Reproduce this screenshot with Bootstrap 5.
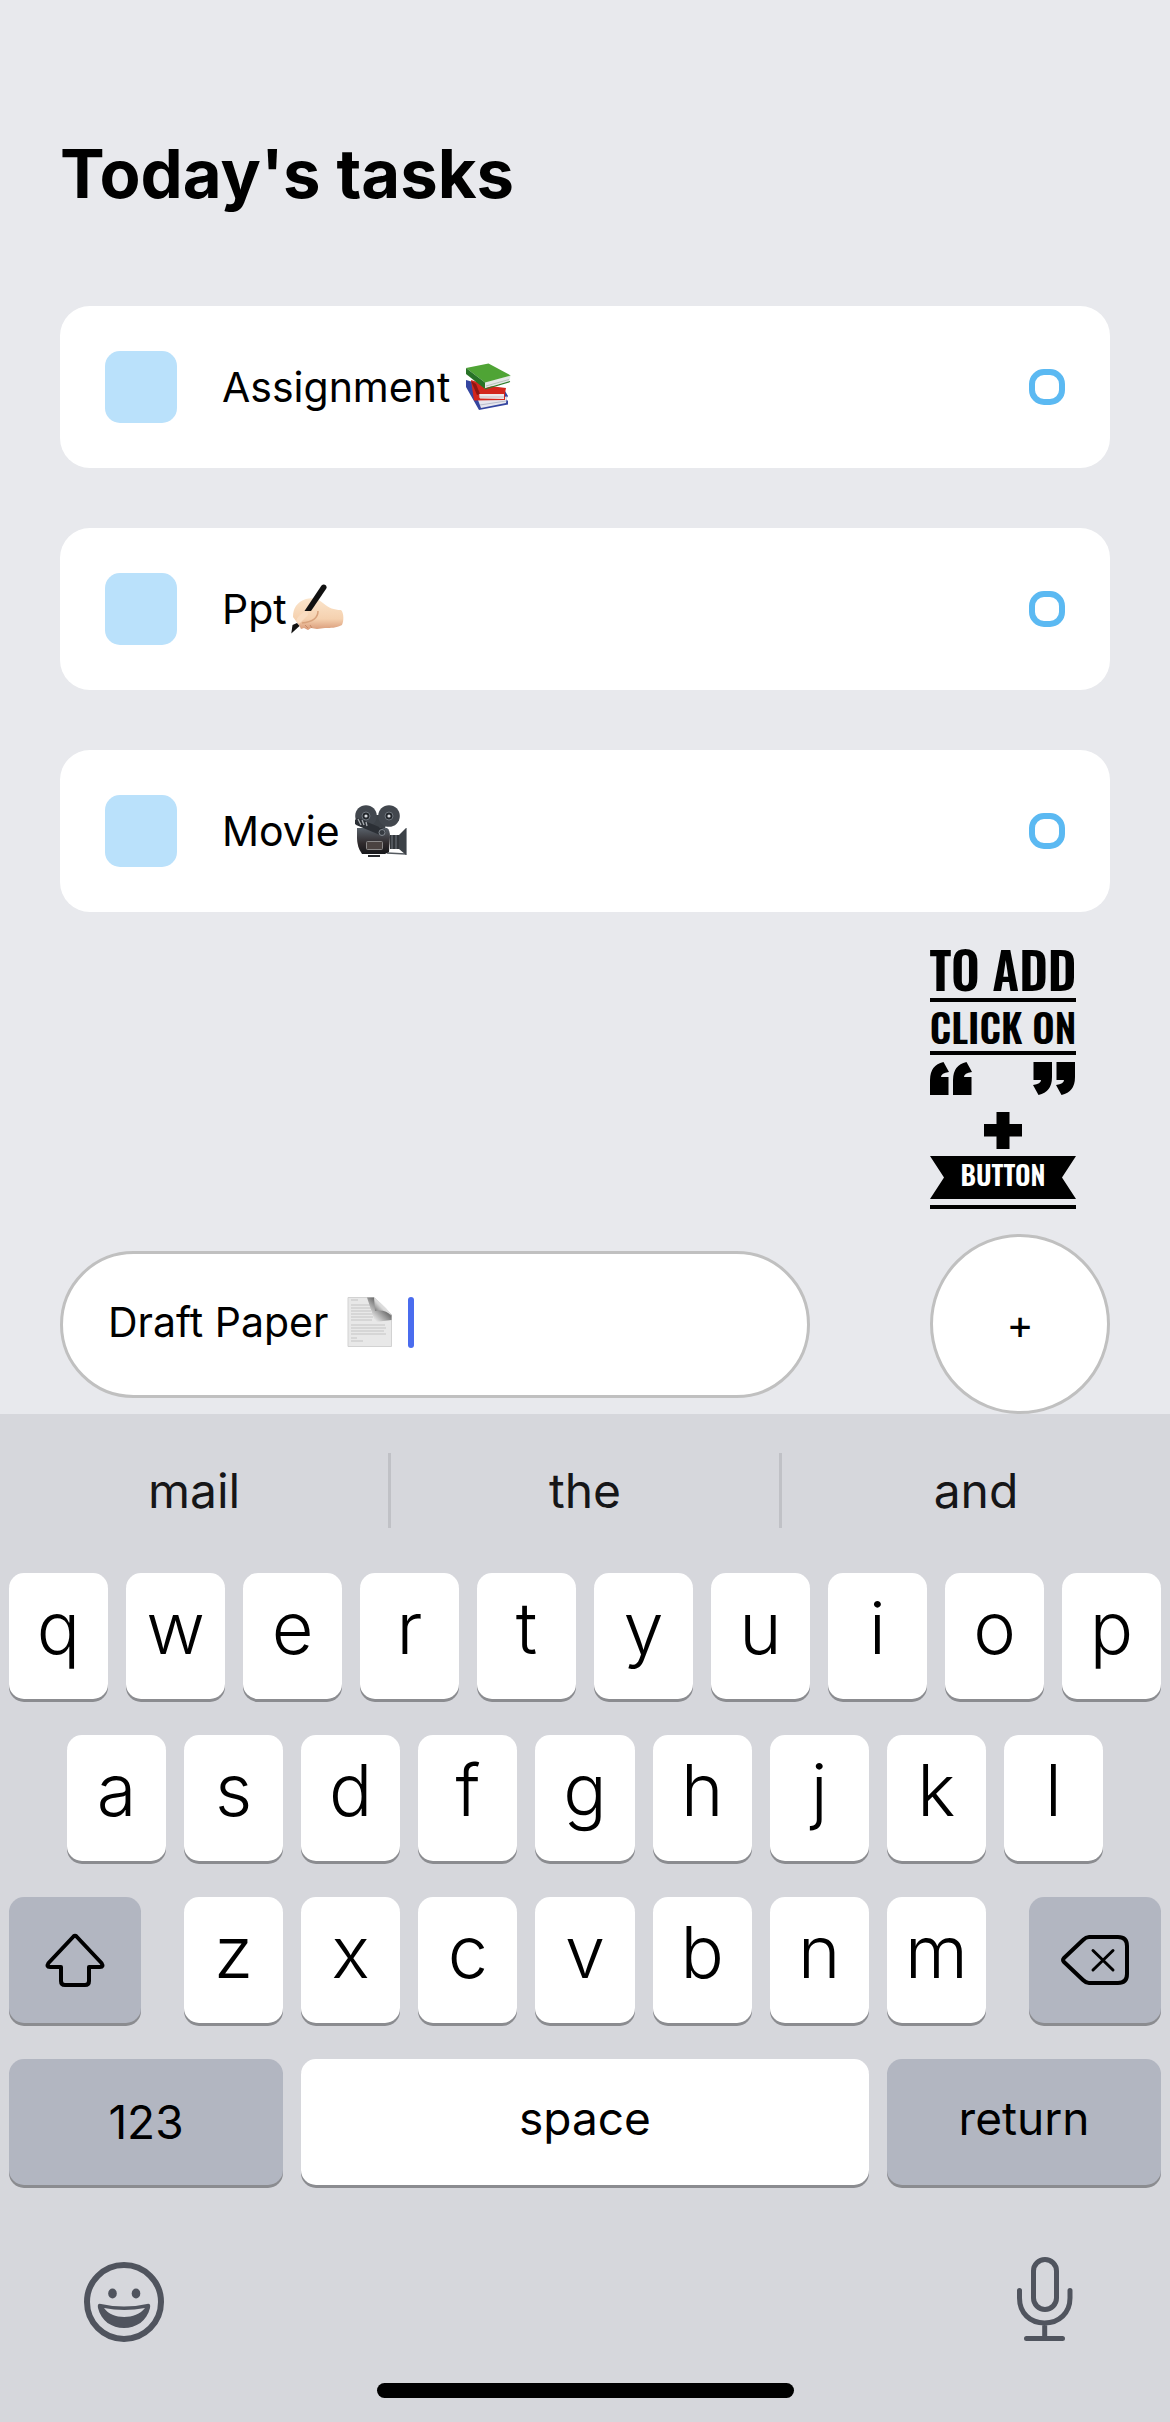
<!DOCTYPE html>
<html lang="en">
<head>
<meta charset="utf-8">
<meta name="viewport" content="width=device-width, initial-scale=1">
<title>Today's tasks</title>
<link rel="stylesheet" href="https://cdn.jsdelivr.net/npm/bootstrap@5.3.0/dist/css/bootstrap.min.css">
<style>
  body { background: #e8e9ed; color: #000; font-family: Inter, Roboto, "Liberation Sans", sans-serif; font-size: 41px; line-height: 60px; }
  .tasks-page { padding: 132px 60px 0; }
  .tasks-title { font-size: 67px; line-height: 84px; margin-bottom: 90px; }
  .task-list { gap: 60px; }
  .task-item { background: #fff; border-radius: 30px; padding: 45px; gap: 45px; }
  .task-square { width: 72px; height: 72px; border-radius: 15px; background: #bae1fb; }
  .task-check { appearance: none; width: 36px; height: 36px; margin: 0; border: 6px solid #5bb9f2; border-radius: 15px; background: #fff; }
  .emoji { display: inline-block; flex: none; }
  .emoji-spaced { margin-left: 15px; }
  .emoji-tight { margin-left: 4px; }
  .add-hint { margin: 34px 34px 24px 0; overflow: visible; }
  .hint-word { font-family: Oswald, "Liberation Sans Narrow", "Roboto Condensed", "DejaVu Sans Condensed", sans-serif; font-weight: 600; text-anchor: middle; }
  .entry-pill { flex: 0 1 750px; height: 147px; border: 3px solid #c0c0c0; border-radius: 74px; padding: 0 45px 4px; background: #fff; }
  .entry-input { width: 239px; border: 0; padding: 0; background: none; color: #000; outline: 0; caret-color: transparent; }
  .entry-caret { width: 6px; height: 51px; border-radius: 3px; background: #4a6cee; margin-left: 15px; }
  .add-btn { width: 180px; height: 180px; border: 3px solid #c0c0c0; background: #fff; padding: 0; color: #000; }
  .keyboard { background: #d6d7dc; padding-bottom: 24px; }
  .hints { padding: 39px 0 45px; }
  .hint-btn { border: 0; background: none; color: #161618; font-size: 48px; line-height: 75px; padding: 0; flex: 1 1 0; }
  .hint-btn + .hint-btn { border-left: 3px solid #c0c1c6; }
  .key-rows { gap: 36px; padding: 0 9px; }
  .key-row { gap: 18px; }
  .key-row-inset { padding: 0 58px; }
  .key-group { gap: 18px; flex: 1 1 0; margin: 0 25px; }
  .key { flex: 1 1 0; min-width: 0; height: 126px; border: 0; border-radius: 15px; background: #fff; color: #000; box-shadow: 0 3px 0 #8b8c90; padding: 0 0 16px; font-size: 72px; font-weight: 350; line-height: 90px; }
  .key-gray { background: #b2b6c1; }
  .key-icon { flex: 0 0 132px; padding: 0; }
  .key-word { font-size: 46px; font-weight: 400; line-height: 60px; padding: 0 0 8px; }
  .key-num { padding: 0; }
  .key-side { flex: 274 1 0; }
  .key-space { flex: 568 1 0; }
  .tool-row { padding: 69px 80px 39px 80px; }
  .tool-btn { border: 0; background: none; padding: 0; }
  .home-bar { width: 417px; height: 15px; border-radius: 8px; background: #000; }
</style>
<script src="https://cdn.jsdelivr.net/npm/bootstrap@5.3.0/dist/js/bootstrap.bundle.min.js"></script>
</head>
<body>
<main class="tasks-page">
  <h1 class="tasks-title fw-bold">Today's tasks</h1>
  <ul class="task-list list-unstyled d-flex flex-column mb-0">
    <li class="task-item d-flex align-items-center">
      <span class="task-square"></span>
      <label class="flex-grow-1 d-flex align-items-center" for="t1">Assignment
        <svg class="emoji emoji-spaced" width="46" height="48" viewBox="0 0 46 48" role="img" aria-label="books">
          <path d="M1 17L1 24 14 47 43 41.500 43 38 41 36 43 33 40 28z" fill="#3546a0"/>
          <path d="M13 37L42 33.500 41 40 16 45z" fill="#e6e6ee"/><path d="M15 42L41 38" stroke="#b9bccb"/>
          <path d="M6 17L25 23 41 25 40 30 40 37 9 37.500z" fill="#d3261c"/>
          <path d="M14 31L39 31 39 36 15 35.500z" fill="#eee9ea"/><path d="M14 34L39 34" stroke="#c9bfc4"/>
          <path d="M6 18L12 32 15 31 11 21z" fill="#8d1512"/>
          <path d="M19 25.500L20 19 45.500 12.500 44.500 18z" fill="#e4e8e6"/><path d="M21 23L44 16.500" stroke="#b8c4bb"/>
          <path d="M1 5L23.500.5 45.700 12.500 20 19.500z" fill="#4fa435"/>
          <path d="M1 5L20 19.500 20 26 1 11z" fill="#277226"/><path d="M20 26L45 18.500" stroke="#2f7c2a" stroke-width="1.300"/>
        </svg>
      </label>
      <input class="task-check" type="checkbox" id="t1">
    </li>
    <li class="task-item d-flex align-items-center">
      <span class="task-square"></span>
      <label class="flex-grow-1 d-flex align-items-center" for="t2">Ppt
        <svg class="emoji emoji-tight" width="53" height="50" viewBox="0 0 53 50" role="img" aria-label="writing hand">
          <defs><linearGradient id="skin" x2="0" y2="1"><stop stop-color="#fbe5cc"/><stop offset=".65" stop-color="#f5d1af"/><stop offset="1" stop-color="#d99a78"/></linearGradient></defs>
          <path d="M2 33C2 24 6 18 15 15 22 13 27 15 32 19 38 24 43 26 50 26 53 29 53 37 51 41 45 44 40 44 34 44L26 45 20 44 17 46 13 44 10 45 8 41z" fill="url(#skin)"/>
          <path d="M27 27C27 34 21 38 11 39" fill="none" stroke="#d8a27c" stroke-width="1.500"/>
          <path d="M14 41l3 3M19 41l2 3" stroke="#c98b68"/>
          <path d="M30.500 1.500C33-1 37 1.500 35 5L20 27 13.500 27z" fill="#111"/><path d="M1.500 41L6 39 8.500 42 .3 49.500z" fill="#111"/>
          <path d="M5 37C7 31 12 29 15 27 18 28 18 31 15 33L8 40z" fill="#f9dcc0"/>
        </svg>
      </label>
      <input class="task-check" type="checkbox" id="t2">
    </li>
    <li class="task-item d-flex align-items-center">
      <span class="task-square"></span>
      <label class="flex-grow-1 d-flex align-items-center" for="t3">Movie
        <svg class="emoji emoji-spaced" width="52" height="52" viewBox="0 0 52 52" role="img" aria-label="movie camera">
          <defs><linearGradient id="cam" x2="0" y2="1"><stop stop-color="#59616a"/><stop offset=".6" stop-color="#2f2a2c"/><stop offset="1" stop-color="#17181b"/></linearGradient></defs>
          <path d="M32 48L51 49" stroke="#555a60" stroke-width="1.500"/>
          <path d="M12 10L33 10 30 24 14 20z" fill="#3d4248"/>
          <circle cx="11" cy="11" r="10.800" fill="#42474e"/><circle cx="34" cy="11" r="10.800" fill="#42474e"/>
          <circle cx="11" cy="11" r="4" fill="#22262b" stroke="#6d747c"/><circle cx="34" cy="11" r="4" fill="#22262b" stroke="#6d747c"/>
          <circle cx="11" cy="11" r="1.600" fill="#dde0e4"/><circle cx="34" cy="11" r="1.600" fill="#dde0e4"/>
          <path d="M2 23L32 23Q35 25 35 32L34 47 30 49 7 49Q2 42 2 33z" fill="url(#cam)"/>
          <rect x="13" y="50" width="12" height="2" fill="#26282c"/>
          <rect x="11.500" y="36.500" width="16" height="8" rx="1" fill="#4b4341" stroke="#8b8989"/>
          <path d="M3 17L27 27" stroke="#2b2f35" stroke-width="7" stroke-linecap="round"/><path d="M3 14l3 6M7 15l2 5M11 17l1 4" stroke="#a9adb2" stroke-width="1.300"/>
          <circle cx="27" cy="27.500" r="3" fill="#363b41" stroke="#858b92"/>
          <rect x="35" y="30" width="9" height="14" fill="#31353a"/><path d="M37 30v14M41 30v14" stroke="#747a81"/>
          <path d="M44 30L51 23 51 50 44 44z" fill="#3c4147"/><path d="M51.500 23v27" stroke="#8d9196"/>
        </svg>
      </label>
      <input class="task-check" type="checkbox" id="t3">
    </li>
  </ul>

  <div class="d-flex justify-content-end">
    <svg class="add-hint" width="146" height="264" viewBox="0 0 146 264" role="img" aria-label="To add click on plus button">
      <text class="hint-word" x="73" y="45" font-size="50">TO ADD</text>
      <text class="hint-word" x="73" y="98" font-size="39">CLICK ON</text>
      <path d="M0 52h146v4H0zM0 105h146v4H0zM0 259h146v4H0z"/>
      <path id="q" d="M13.500 116L19 126Q11 127 11 131H18.500V149H0V134Q0 119 13.500 116z"/>
      <use href="#q" x="23"/>
      <use href="#q" transform="rotate(180 72.500 132.500)"/><use href="#q" transform="rotate(180 61 132.500)"/>
      <path d="M66.500 166h13v12H92v12.500H79.500V203h-13V190.500H54V178h12.500z"/>
      <path d="M0 210H146L132 231.500 146 253H0L14 231.500z"/>
      <text class="hint-word" x="73" y="240" font-size="27" fill="#fff">BUTTON</text>
    </svg>
  </div>

  <form class="d-flex align-items-center justify-content-between">
    <div class="entry-pill d-flex align-items-center">
      <input class="entry-input" type="text" value="Draft Paper" aria-label="Write a task">
      <svg class="emoji" width="46" height="50" viewBox="0 0 46 50" role="img" aria-label="page with curl">
        <defs><linearGradient id="curl" x1="0" y1="1" x2="1" y2="0"><stop offset=".1" stop-color="#666"/><stop offset=".45" stop-color="#d8d8d8"/><stop offset="1" stop-color="#fff"/></linearGradient>
        <linearGradient id="shade" x1="1" x2="0" y2="1"><stop offset=".35" stop-color="#666"/><stop offset=".8" stop-color="#e8e8e8"/></linearGradient></defs>
        <path d="M1 .5H27L44.500 18V49.500H1z" fill="#e8e8e8" stroke="#d2d2d2"/>
        <path d="M4 3h7M4 8h19M4 11h21M4 14h20M4 17h22M4 20h22M4 23h21M4 28h34M4 31h35M4 34h33M4 37h35M4 41h6M4 44h12" stroke="#bbb" stroke-width=".8"/>
        <path d="M20 .5H27L44.500 18V23L28 25z" fill="url(#shade)"/>
        <path d="M27 .5L28 14Q38 12 44.500 19 42 12 27 .5z" fill="url(#curl)"/>
      </svg>
      <span class="entry-caret"></span>
    </div>
    <button class="add-btn rounded-circle" type="button" aria-label="Add task">+</button>
  </form>
</main>

<section class="keyboard" aria-label="Keyboard">
  <div class="hints d-flex">
    <button class="hint-btn" type="button">mail</button>
    <button class="hint-btn" type="button">the</button>
    <button class="hint-btn" type="button">and</button>
  </div>
  <div class="key-rows d-flex flex-column">
    <div class="key-row d-flex">
      <button class="key" type="button">q</button><button class="key" type="button">w</button><button class="key" type="button">e</button><button class="key" type="button">r</button><button class="key" type="button">t</button><button class="key" type="button">y</button><button class="key" type="button">u</button><button class="key" type="button">i</button><button class="key" type="button">o</button><button class="key" type="button">p</button>
    </div>
    <div class="key-row key-row-inset d-flex">
      <button class="key" type="button">a</button><button class="key" type="button">s</button><button class="key" type="button">d</button><button class="key" type="button">f</button><button class="key" type="button">g</button><button class="key" type="button">h</button><button class="key" type="button">j</button><button class="key" type="button">k</button><button class="key" type="button">l</button>
    </div>
    <div class="key-row d-flex">
      <button class="key key-gray key-icon d-flex align-items-center justify-content-center" type="button" aria-label="Shift">
        <svg width="60" height="54" viewBox="0 0 60 54" fill="none" stroke="#000" stroke-width="4" stroke-linejoin="round"><path d="M28.500 3.500Q30 2 31.500 3.500L56.500 30Q59 34 55 34H44V48Q44 52 40 52H20Q16 52 16 48V34H5Q1 34 3.500 30z"/></svg>
      </button>
      <div class="key-group d-flex">
        <button class="key" type="button">z</button><button class="key" type="button">x</button><button class="key" type="button">c</button><button class="key" type="button">v</button><button class="key" type="button">b</button><button class="key" type="button">n</button><button class="key" type="button">m</button>
      </div>
      <button class="key key-gray key-icon d-flex align-items-center justify-content-center" type="button" aria-label="Delete">
        <svg width="68" height="50" viewBox="0 0 68 50" fill="none" stroke="#000" stroke-width="4" stroke-linejoin="round" stroke-linecap="round"><path d="M28 2H57Q66 2 66 11V39Q66 48 57 48H28Q25 48 22 45L3 27Q1 25 3 23L22 5Q25 2 28 2z"/><path stroke-width="3" d="M32 15.500L52 35M52 15.500L32 35"/></svg>
      </button>
    </div>
    <div class="key-row d-flex">
      <button class="key key-gray key-word key-num key-side" type="button">123</button>
      <button class="key key-word key-space" type="button">space</button>
      <button class="key key-gray key-word key-side" type="button">return</button>
    </div>
  </div>
  <div class="tool-row d-flex justify-content-between">
    <button class="tool-btn d-flex" type="button" aria-label="Emoji">
      <svg width="88" height="90" viewBox="80 2254 88 90" fill="#50545e"><circle cx="124" cy="2302" r="37" fill="none" stroke="#50545e" stroke-width="6"/><ellipse cx="112.500" cy="2293.500" rx="4.300" ry="5"/><ellipse cx="136" cy="2293.500" rx="4.300" ry="5"/><path fill-rule="evenodd" d="M101 2304Q124 2309 147 2304 151 2303 150 2308C147 2321 136 2328 124 2328S101 2321 98 2308Q97 2303 101 2304zM104 2308C112 2320 136 2320 145 2308Q124 2312 104 2308z"/></svg>
    </button>
    <button class="tool-btn d-flex" type="button" aria-label="Dictate">
      <svg width="90" height="90" viewBox="1000 2254 90 90" fill="none" stroke="#50545e" stroke-width="5" stroke-linecap="round"><rect x="1033.500" y="2259.500" width="23" height="50" rx="11.500"/><path d="M1019.500 2290.500V2298C1019.500 2313 1030 2323 1044.500 2323S1070 2313 1070 2298V2290.500M1044.700 2323V2338M1026.500 2338.500H1062.500"/></svg>
    </button>
  </div>
  <div class="home-bar mx-auto"></div>
</section>
</body>
</html>
